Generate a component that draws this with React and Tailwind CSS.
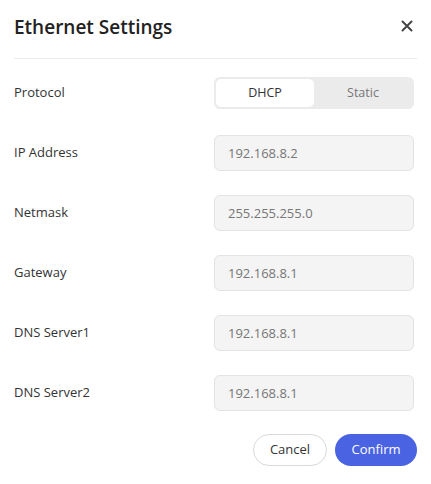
import { useState } from "react";

const fields = [
  { label: "IP Address", value: "192.168.8.2" },
  { label: "Netmask", value: "255.255.255.0" },
  { label: "Gateway", value: "192.168.8.1" },
  { label: "DNS Server1", value: "192.168.8.1" },
  { label: "DNS Server2", value: "192.168.8.1" },
];

function App() {
  const [mode, setMode] = useState("dhcp");

  return (
    <div className="w-[431px] h-[484px] bg-white font-['Open_Sans',sans-serif] text-[#333]">
      <div className="flex items-center justify-between pl-[14px] pr-[18px] h-[58px]">
        <h2 className="text-[19px] font-semibold text-[#222] leading-none pb-[4px]">Ethernet Settings</h2>
        <button className="text-[#444] pb-[6px]">
          <svg width="12" height="12" viewBox="0 0 12 12" fill="none" stroke="currentColor" strokeWidth="2" strokeLinecap="round">
            <path d="M1.5 1.5l9 9M10.5 1.5l-9 9" />
          </svg>
        </button>
      </div>
      <div className="mx-[14px] border-t border-[#ebebeb]" />

      <div className="flex flex-col gap-[24px] pl-[14px] pr-[17px] pt-[16px]">
        <div className="flex items-center justify-between h-[36px]">
          <span className="text-[13px]">Protocol</span>
          <div className="flex w-[200px] h-[32px] p-[2px] rounded-md bg-[#ebebeb]">
            <button
              onClick={() => setMode("dhcp")}
              className={mode === "dhcp" ? "flex-1 rounded-[5px] bg-white text-[12.5px] text-[#333]" : "flex-1 text-[12.5px] text-[#777]"}
            >
              DHCP
            </button>
            <button
              onClick={() => setMode("static")}
              className={mode === "static" ? "flex-1 rounded-[5px] bg-white text-[12.5px] text-[#333]" : "flex-1 text-[12.5px] text-[#777]"}
            >
              Static
            </button>
          </div>
        </div>

        {fields.map((f) => (
          <div key={f.label} className="flex items-center justify-between h-[36px]">
            <span className="text-[13px]">{f.label}</span>
            <input
              readOnly
              value={f.value}
              className="w-[200px] h-[36px] rounded-md border border-[#e3e3e3] bg-[#f4f4f4] px-[13px] text-[13px] text-[#777] outline-none"
            />
          </div>
        ))}
      </div>

      <div className="flex justify-end gap-[8px] pr-[14px] pt-[23px]">
        <button className="w-[74px] h-[32px] rounded-full border border-[#d9d9d9] bg-white text-[13px] text-[#333]">
          Cancel
        </button>
        <button className="w-[82px] h-[32px] rounded-full bg-[#4a63e2] text-[13px] text-white">
          Confirm
        </button>
      </div>
    </div>
  );
}

export default App;
